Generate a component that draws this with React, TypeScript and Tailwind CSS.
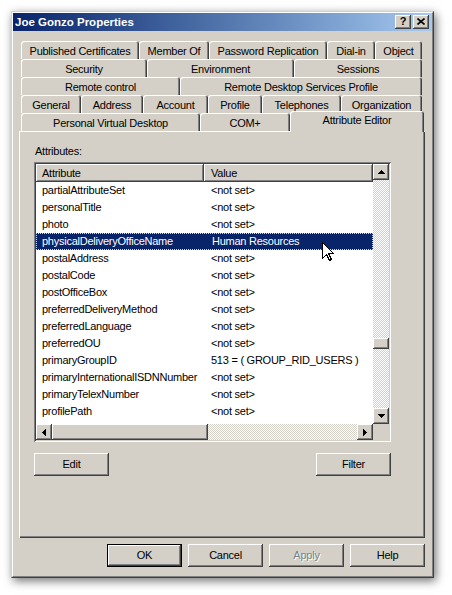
import React from "react";

const RAISED =
  "shadow-[inset_-1px_-1px_0_#404040,inset_1px_1px_0_#ffffff,inset_-2px_-2px_0_#808080]";
const TAB =
  "shadow-[inset_1px_1px_0_#ffffff,inset_-1px_0_0_#404040,inset_-2px_0_0_#808080]";
const CHECKER =
  "bg-[image:repeating-conic-gradient(#ffffff_0%_25%,#d4d0c8_0%_50%)] bg-[length:2px_2px]";

type TabDef = [string, number];

const tabRows: TabDef[][] = [
  [
    ["Published Certificates", 118],
    ["Member Of", 70],
    ["Password Replication", 118],
    ["Dial-in", 48],
    ["Object", 47],
  ],
  [
    ["Security", 126],
    ["Environment", 147],
    ["Sessions", 128],
  ],
  [
    ["Remote control", 159],
    ["Remote Desktop Services Profile", 242],
  ],
  [
    ["General", 60],
    ["Address", 62],
    ["Account", 65],
    ["Profile", 54],
    ["Telephones", 79],
    ["Organization", 81],
  ],
];

const NS = "<not set>";
const attrs: [string, string][] = [
  ["partialAttributeSet", NS],
  ["personalTitle", NS],
  ["photo", NS],
  ["physicalDeliveryOfficeName", "Human Resources"],
  ["postalAddress", NS],
  ["postalCode", NS],
  ["postOfficeBox", NS],
  ["preferredDeliveryMethod", NS],
  ["preferredLanguage", NS],
  ["preferredOU", NS],
  ["primaryGroupID", "513 = ( GROUP_RID_USERS )"],
  ["primaryInternationalISDNNumber", NS],
  ["primaryTelexNumber", NS],
  ["profilePath", NS],
  ["proxiedObjectName", NS],
];

function Tab({ label, w }: { label: string; w: number }) {
  return (
    <div
      className={`h-[18px] shrink-0 flex items-center justify-center pt-[2px] rounded-t-[3px] whitespace-nowrap ${TAB}`}
      style={{ width: w }}
    >
      {label}
    </div>
  );
}

function ArrowUp() {
  return (
    <svg width="7" height="4" viewBox="0 0 7 4" shapeRendering="crispEdges">
      <rect x="3" y="0" width="1" height="1" fill="#000" />
      <rect x="2" y="1" width="3" height="1" fill="#000" />
      <rect x="1" y="2" width="5" height="1" fill="#000" />
      <rect x="0" y="3" width="7" height="1" fill="#000" />
    </svg>
  );
}
function ArrowDown() {
  return (
    <svg width="7" height="4" viewBox="0 0 7 4" shapeRendering="crispEdges">
      <rect x="0" y="0" width="7" height="1" fill="#000" />
      <rect x="1" y="1" width="5" height="1" fill="#000" />
      <rect x="2" y="2" width="3" height="1" fill="#000" />
      <rect x="3" y="3" width="1" height="1" fill="#000" />
    </svg>
  );
}
function ArrowLeft() {
  return (
    <svg width="4" height="7" viewBox="0 0 4 7" shapeRendering="crispEdges">
      <rect x="3" y="0" width="1" height="7" fill="#000" />
      <rect x="2" y="1" width="1" height="5" fill="#000" />
      <rect x="1" y="2" width="1" height="3" fill="#000" />
      <rect x="0" y="3" width="1" height="1" fill="#000" />
    </svg>
  );
}
function ArrowRight() {
  return (
    <svg width="4" height="7" viewBox="0 0 4 7" shapeRendering="crispEdges">
      <rect x="0" y="0" width="1" height="7" fill="#000" />
      <rect x="1" y="1" width="1" height="5" fill="#000" />
      <rect x="2" y="2" width="1" height="3" fill="#000" />
      <rect x="3" y="3" width="1" height="1" fill="#000" />
    </svg>
  );
}

function Button({
  label,
  isDefault,
  disabled,
}: {
  label: string;
  isDefault?: boolean;
  disabled?: boolean;
}) {
  const sh = isDefault
    ? "shadow-[inset_0_0_0_1px_#000000,inset_-2px_-2px_0_#404040,inset_2px_2px_0_#ffffff,inset_-3px_-3px_0_#808080]"
    : RAISED;
  return (
    <div
      className={`w-[75px] h-[23px] flex items-center justify-center bg-[#d4d0c8] ${sh} ${
        disabled ? "text-[#808080] [text-shadow:1px_1px_0_#ffffff]" : "text-black"
      }`}
    >
      {label}
    </div>
  );
}

export default function App() {
  return (
    <div className="relative w-[452px] h-[595px] bg-white overflow-hidden pt-[11px] pl-[11px] font-['Liberation_Sans',Arial,sans-serif] text-[11px] tracking-[-0.25px] text-black leading-[13px]">
      <div className="w-[423px] h-[567px] bg-[#d4d0c8] border border-t-[#d4d0c8] border-l-[#d4d0c8] border-r-[#404040] border-b-[#404040] shadow-[2px_3px_9px_rgba(0,0,0,0.55)]">
        <div className="h-full flex flex-col border border-t-white border-l-white border-r-[#808080] border-b-[#808080]">
          {/* Title bar */}
          <div className="h-[18px] shrink-0 flex items-center bg-linear-to-r from-[#0a246a] to-[#a6caf0] pl-[2px] pr-[3px]">
            <span className="text-white font-bold text-[11.5px] tracking-normal">
              Joe Gonzo Properties
            </span>
            <div
              className={`ml-auto w-[16px] h-[14px] bg-[#d4d0c8] flex items-center justify-center font-bold text-[11px] leading-[11px] pb-[1px] ${RAISED}`}
            >
              ?
            </div>
            <div
              className={`ml-[2px] w-[16px] h-[14px] bg-[#d4d0c8] flex items-center justify-center pb-[1px] pr-[1px] ${RAISED}`}
            >
              <svg width="8" height="7" viewBox="0 0 8 7">
                <path d="M0.5 0.5 L7.5 6.5 M7.5 0.5 L0.5 6.5" stroke="#000" strokeWidth="1.6" />
              </svg>
            </div>
          </div>

          {/* Body */}
          <div className="flex flex-col pt-[10px] pl-[6px]">
            {/* Tab rows */}
            <div className="flex flex-col pl-[2px]">
              {tabRows.map((row, i) => (
                <div key={i} className="flex h-[18px]">
                  {row.map(([l, w]) => (
                    <Tab key={l} label={l} w={w} />
                  ))}
                </div>
              ))}
              <div className="flex h-[18px] items-end">
                <Tab label="Personal Virtual Desktop" w={179} />
                <Tab label="COM+" w={90} />
                <div
                  className={`relative z-10 w-[134px] h-[21px] mb-[-1px] shrink-0 flex items-center justify-center pb-[2px] rounded-t-[3px] bg-[#d4d0c8] whitespace-nowrap ${TAB}`}
                >
                  Attribute Editor
                </div>
              </div>
            </div>

            {/* Panel */}
            <div className="w-[406px] h-[407px] pt-[14px] pl-[15px] shadow-[inset_1px_1px_0_#ffffff,inset_-1px_-1px_0_#404040,inset_-2px_-2px_0_#808080]">
              <div className="h-[13px] pl-[1px]">Attributes:</div>
              {/* List view */}
              <div className="mt-[4px] w-[357px] h-[280px] p-[2px] bg-white shadow-[inset_1px_1px_0_#808080,inset_-1px_-1px_0_#ffffff,inset_2px_2px_0_#404040,inset_-2px_-2px_0_#d4d0c8]">
                <div className="grid grid-cols-[337px_16px] grid-rows-[260px_16px]">
                  {/* content */}
                  <div className="flex flex-col overflow-hidden">
                    <div className="flex h-[18px] shrink-0 bg-[#d4d0c8]">
                      <div className={`w-[168px] h-full flex items-center pl-[6px] ${RAISED}`}>
                        Attribute
                      </div>
                      <div className={`flex-1 h-full flex items-center pl-[7px] ${RAISED}`}>
                        Value
                      </div>
                    </div>
                    <div className="flex flex-col overflow-hidden">
                      {attrs.map(([a, v], i) => {
                        const sel = i === 3;
                        return (
                          <div
                            key={a}
                            className={`flex h-[17px] shrink-0 items-center whitespace-nowrap ${
                              sel
                                ? "bg-[#0a246a] text-white border border-dotted border-[#e6d9a0]"
                                : ""
                            }`}
                          >
                            <div className={`w-[168px] shrink-0 overflow-hidden ${sel ? "pl-[5px]" : "pl-[6px]"}`}>
                              {a}
                            </div>
                            <div className="pl-[7px]">{v}</div>
                          </div>
                        );
                      })}
                    </div>
                  </div>
                  {/* vertical scrollbar */}
                  <div className="flex flex-col">
                    <div className={`h-[16px] shrink-0 bg-[#d4d0c8] flex items-center justify-center ${RAISED}`}>
                      <ArrowUp />
                    </div>
                    <div className={`flex-1 flex flex-col ${CHECKER}`}>
                      <div className={`mt-[158px] h-[11px] bg-[#d4d0c8] ${RAISED}`} />
                    </div>
                    <div className={`h-[16px] shrink-0 bg-[#d4d0c8] flex items-center justify-center ${RAISED}`}>
                      <ArrowDown />
                    </div>
                  </div>
                  {/* horizontal scrollbar */}
                  <div className="flex">
                    <div className={`w-[16px] shrink-0 bg-[#d4d0c8] flex items-center justify-center ${RAISED}`}>
                      <ArrowLeft />
                    </div>
                    <div className={`w-[156px] shrink-0 bg-[#d4d0c8] ${RAISED}`} />
                    <div className={`flex-1 ${CHECKER}`} />
                    <div className={`w-[16px] shrink-0 bg-[#d4d0c8] flex items-center justify-center ${RAISED}`}>
                      <ArrowRight />
                    </div>
                  </div>
                  <div className="bg-[#d4d0c8]" />
                </div>
              </div>
              <div className="mt-[11px] w-[357px] flex justify-between">
                <Button label="Edit" />
                <Button label="Filter" />
              </div>
            </div>

            {/* Bottom buttons */}
            <div className="mt-[6px] w-[406px] flex justify-end gap-[6px]">
              <Button label="OK" isDefault />
              <Button label="Cancel" />
              <Button label="Apply" disabled />
              <Button label="Help" />
            </div>
          </div>
        </div>
      </div>

      {/* mouse cursor */}
      <svg
        className="absolute left-[322px] top-[242px]"
        width="13"
        height="20"
        viewBox="0 0 13 20"
        shapeRendering="crispEdges"
      >
        <path
          d="M0.5 0.5 L0.5 16.5 L4.5 12.5 L7.5 18.5 L9.5 17.5 L6.5 11.5 L11.5 11.5 Z"
          fill="#ffffff"
          stroke="#000000"
          strokeWidth="1"
        />
      </svg>
    </div>
  );
}
